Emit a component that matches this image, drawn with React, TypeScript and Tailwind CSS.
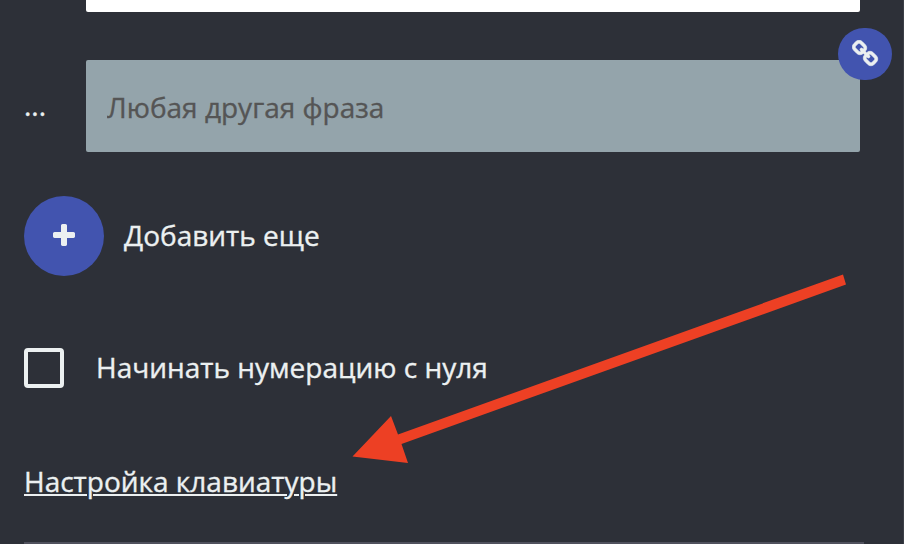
const LINK_PATH =
  "M1456 1216q0-40-28-68l-208-208q-28-28-68-28-42 0-72 32 3 3 19 18.5t21.5 21.5 15 19 13 25.5 3.5 27.5q0 40-28 68t-68 28q-15 0-27.5-3.5t-25.5-13-19-15-21.5-21.5-18.5-19q-33 31-33 73 0 40 28 68l206 207q27 27 68 27 40 0 68-26l147-146q28-28 28-67zm-703-705q0-40-28-68l-206-207q-28-28-68-28-39 0-68 27l-147 146q-28 28-28 67 0 40 28 68l208 208q27 27 68 27 42 0 72-31-3-3-19-18.5t-21.5-21.5-15-19-13-25.5-3.5-27.5q0-40 28-68t68-28q15 0 27.5 3.5t25.5 13 19 15 21.5 21.5 18.5 19q33-31 33-73zm895 705q0 120-85 203l-147 146q-83 83-203 83-121 0-204-85l-206-207q-83-83-83-203 0-123 88-209l-88-88q-86 88-208 88-120 0-204-84l-208-208q-84-84-84-204t85-203l147-146q83-83 203-83 121 0 204 85l206 207q83 83 83 203 0 123-88 209l88 88q86-88 208-88 120 0 204 84l208 208q84 84 84 204z";

const PLUS_PATH =
  "M1600 736v192q0 40-28 68t-68 28h-416v416q0 40-28 68t-68 28h-192q-40 0-68-28t-28-68v-416h-416q-40 0-68-28t-28-68v-192q0-40 28-68t68-28h416v-416q0-40 28-68t68-28h192q40 0 68 28t28 68v416h416q40 0 68 28t28 68z";

function PhraseRow() {
  return (
    <div className="mt-12 flex h-[92px] items-center">
      <span className="w-[62px] shrink-0 pb-0.5">...</span>
      <div className="relative h-full w-[774px]">
        <input
          className="block h-full w-full rounded-xs bg-[#94a4ab] pb-0 pl-[21px] pr-5 pt-0.5 text-[#555] outline-none placeholder:text-[#555] placeholder:opacity-100"
          placeholder="Любая другая фраза"
        />
        <button
          aria-label="Ссылка"
          className="absolute -right-8 -top-8 flex h-[52px] w-[54px] items-center justify-center rounded-full bg-[#4254af] pl-0.5 text-[#ecf0f1]"
        >
          <svg
            className="size-7"
            viewBox="0 0 1792 1792"
            fill="currentColor"
            stroke="currentColor"
            strokeWidth={40}
          >
            <path d={LINK_PATH} />
          </svg>
        </button>
      </div>
    </div>
  );
}

export default function App() {
  return (
    <main className="relative flex h-[544px] w-[904px] flex-col overflow-hidden border-r border-[#3b3e46] bg-[#2d3038] pl-6 font-['Open_Sans','Noto_Sans',sans-serif] text-[28px] leading-[40px] text-[#ecf0f1] [-webkit-text-stroke:0.35px_currentColor]">
      <div className="ml-[62px] h-3 w-[774px] shrink-0 rounded-b-xs bg-white" />
      <PhraseRow />
      <div className="mt-11 flex items-center gap-5">
        <button
          aria-label="Добавить"
          className="flex size-20 items-center justify-center rounded-full bg-[#4254af]"
        >
          <svg className="size-7" viewBox="0 0 1792 1792" fill="currentColor">
            <path d={PLUS_PATH} />
          </svg>
        </button>
        <span className="pb-0.5">Добавить еще</span>
      </div>
      <label className="mt-[71px] flex items-center gap-8">
        <span className="size-10 rounded-sm border-4 border-[#ecf0f1]" />
        <span className="pb-0.5">Начинать нумерацию с нуля</span>
      </label>
      <a className="mt-[72px] self-start underline decoration-2 underline-offset-2" href="#">
        Настройка клавиатуры
      </a>
      <div className="mt-[41px] h-0.5 w-[840px] shrink-0 bg-[#50515d]" />
      <svg className="pointer-events-none absolute left-0 top-0" width="904" height="544" viewBox="0 0 904 544">
        <polygon fill="#ed4024" points="352.5,456.5 391,416 398,434.5 843,274.5 846,284.5 401.5,444 408,463" />
      </svg>
    </main>
  );
}
